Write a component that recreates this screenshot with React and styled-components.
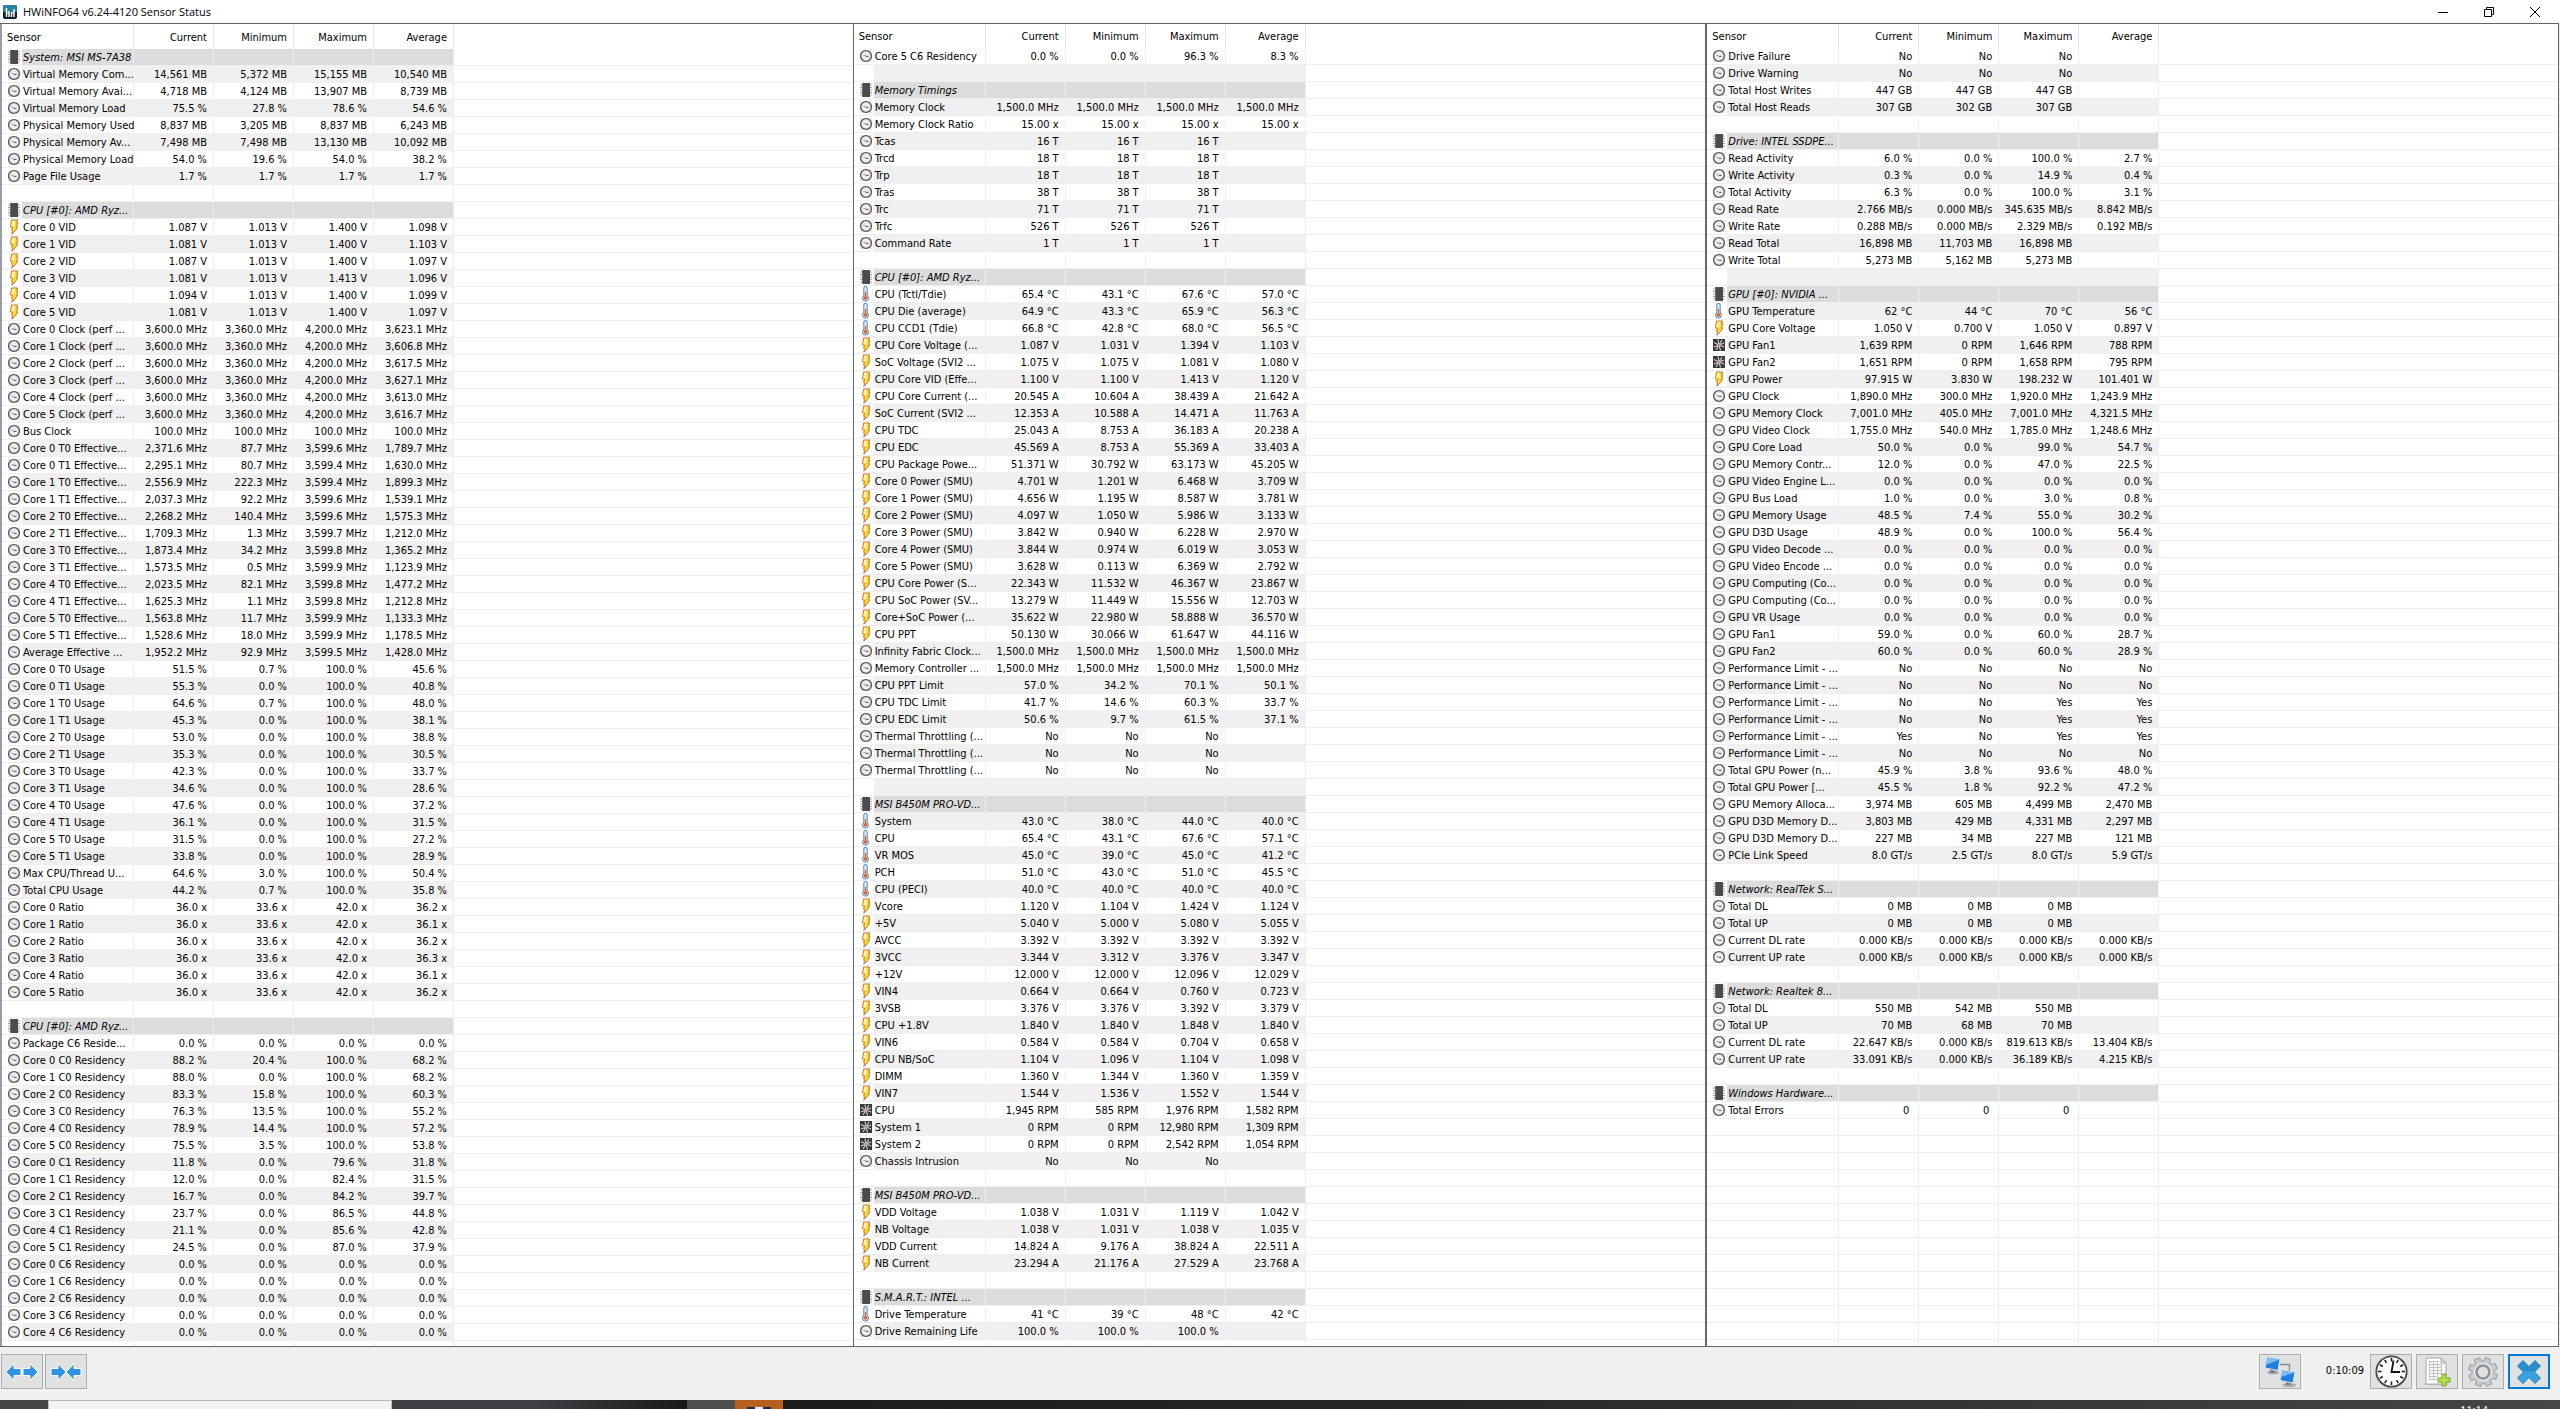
import React from "react";
import styled, { createGlobalStyle } from "styled-components";

const GlobalStyle = createGlobalStyle`
  * {
    box-sizing: border-box;
  }
  body {
    margin: 0;
    overflow: hidden;
    background: #f0f0f0;
  }
`;

const Desktop = styled.div`
  display: flex;
  flex-direction: column;
  height: 100vh;
  color: #000;
  background: #f0f0f0;
  font-family: "DejaVu Sans Condensed", "DejaVu Sans", sans-serif;
  font-size: 11px;
`;
const TitleBar = styled.header`
  display: flex;
  align-items: center;
  flex: 0 0 23px;
  padding: 0 2px 0 3px;
  background: #fff;
`;
const Title = styled.h1`
  flex: 1;
  margin: 0 0 0 6px;
  font-family: "Open Sans", "Noto Sans", sans-serif;
  font-size: 11px;
  font-weight: 400;
  line-height: 20px;
`;
const WindowButton = styled.button`
  display: flex;
  align-items: center;
  justify-content: center;
  width: 46px;
  height: 22px;
  padding: 0;
  border: 0;
  background: none;
`;
const Panels = styled.main`
  display: grid;
  grid-template-columns: repeat(3, 1fr);
  flex: 1;
  min-height: 0;
  margin-right: 1px;
  border: solid #646464;
  border-width: 1px 1px 1px 0;
  background: #fff;
`;
const Panel = styled.section`
  min-width: 0;
  overflow: hidden;
  border-left: 1px solid #66676a;

  &:first-child {
    padding-top: 1px;
    border-left: 2px solid #9a9ca6;
  }
  &:last-child {
    border-left-width: 2px;
  }
`;
const Table = styled.table`
  width: 100%;
  table-layout: fixed;
  border-spacing: 0;
  white-space: nowrap;
`;
const HeadCell = styled.th`
  height: 24px;
  padding: 0 6px 0 5px;
  border-right: 1px solid ${(p) => (p.$last ? "#fff" : "#e5e5e5")};
  font-weight: 400;
  text-align: ${(p) => (p.$left ? "left" : "right")};
`;
const rowColors = { group: "#dcdcdc", odd: "#f0f0f0", even: "#fff" };
const Row = styled.tr`
  --row-bg: ${(p) => rowColors[p.$tone]};
`;
const IconCell = styled.td`
  height: 17px;
  padding: 0 0 0 5px;
  border-bottom: 1px solid #efefef;
  line-height: 0;
`;
const NameCell = styled.th`
  padding: 2px 0 0 1px;
  border-right: 1px solid #efefef;
  border-bottom: 1px solid #efefef;
  background: var(--row-bg);
  font-weight: 400;
  font-style: ${(p) => (p.$group ? "italic" : "normal")};
  line-height: 14px;
  text-align: left;
`;
const ValueCell = styled.td`
  padding: 2px 6px 0 0;
  border-right: 1px solid #efefef;
  border-bottom: 1px solid #efefef;
  background: var(--row-bg);
  line-height: 14px;
  text-align: right;
`;
const RestCell = styled.td`
  padding: 0;
  border-bottom: 1px solid #efefef;
`;
const Toolbar = styled.footer`
  display: flex;
  align-items: flex-start;
  justify-content: space-between;
  flex: 0 0 53px;
  padding: 7px 10px 0 1px;
`;
const ToolGroup = styled.div`
  display: flex;
  gap: ${(p) => (p.$tight ? "2px" : "4px")};
`;
const ToolButton = styled.button`
  display: flex;
  align-items: center;
  justify-content: center;
  width: 42px;
  height: 35px;
  padding: 0;
  border: ${(p) => (p.$active ? "2px solid #0078d7" : "1px solid #adadad")};
  background: #e1e1e1;
`;
const Elapsed = styled.time`
  width: 61px;
  padding-right: 2px;
  line-height: 33px;
  text-align: right;
`;
const Taskbar = styled.div`
  display: flex;
  flex: 0 0 9px;
  overflow: hidden;
  background: #444546;
`;
const StartArea = styled.div`
  flex: 0 0 48px;
`;
const SearchArea = styled.div`
  flex: 0 0 344px;
  border: 1px solid #bababa;
  border-bottom: 0;
  background: #f2f2f2;
`;
const TaskArea = styled.div`
  flex: 0 0 295px;
  background: linear-gradient(90deg, #3e3f42 50%, #191919);
`;
const TaskItem = styled.div`
  display: flex;
  align-items: flex-end;
  justify-content: center;
  flex: 0 0 48px;
  background: ${(p) => (p.$alert ? "#b5601e" : "#4e4e4e")};
`;
const Tray = styled.div`
  display: flex;
  justify-content: flex-end;
  flex: 1;
  padding-right: 72px;
  background: linear-gradient(90deg, #1c1c1c, #282828 40%, #464646);
  color: #fff;
  font-family: "Open Sans", "Noto Sans", sans-serif;
  font-size: 11px;
  line-height: 20px;
`;

const ClockIcon = () => (
  <svg width="14" height="16" viewBox="0 0 14 16">
    <rect x="1" y="2" width="12" height="12" fill="#e9e9e9" />
    <circle cx="7" cy="8" r="5.400" fill="#ededed" stroke="#585858" strokeWidth="1.400" />
    <path d="M4.500 7.200 7 8.200" stroke="#b08a8a" strokeWidth="1" />
    <path d="M7 8.400h2.500" stroke="#555" strokeWidth="1" />
  </svg>
);

const BoltIcon = () => (
  <svg width="14" height="16" viewBox="0 0 14 16">
    <path
      d="M4.500 1h6L9.800 4h1L9.600 8h1L8.500 11.500 4.800 15.200l.7-3.700-.9-.3L5.500 8H3.500z"
      fill="#ffd92a"
      stroke="#c4672b"
      strokeWidth=".9"
    />
    <path d="M5.200 1.800h3.300L7 5.500h1.200L6.600 7.400H4.300z" fill="#fff3b0" />
  </svg>
);

const ThermoIcon = () => (
  <svg width="14" height="16" viewBox="0 0 14 16">
    <path
      d="M4.800 2.200a1.700 1.700 0 0 1 3.400 0v7.600a2.900 2.900 0 1 1-3.400 0z"
      fill="#e2f0fa"
      stroke="#5b93c4"
      strokeWidth="1.100"
    />
    <path d="M6.500 6v6" stroke="#ea5a17" strokeWidth="1.300" />
    <circle cx="6.500" cy="12" r="1.800" fill="#ea5a17" />
  </svg>
);

const FanIcon = () => (
  <svg width="14" height="16" viewBox="0 0 14 16">
    <rect x="1" y="2" width="12" height="12" fill="#383838" />
    <path
      d="M7 8 6 2.500M7 8l3-5M7 8l5-2M7 8l5 2M7 8l1.500 5.500M7 8l-3 5M7 8l-5 2M7 8 2 5.500"
      stroke="#d4d4d4"
      strokeWidth="1.100"
    />
    <circle cx="7" cy="8" r="1.600" fill="#b29a9c" />
  </svg>
);

const ChipIcon = () => (
  <svg width="14" height="16" viewBox="0 0 14 16">
    <path d="M1 3h12M1 5.500h12M1 8h12M1 10.500h12M1 13h12" stroke="#a3a3a3" strokeWidth="1" />
    <rect x="3" y="1" width="8" height="14" fill="#4c4c4e" />
    <path d="M3.500 1v14" stroke="#6d6d70" strokeWidth="1" />
  </svg>
);

const icons = { c: ClockIcon, v: BoltIcon, t: ThermoIcon, f: FanIcon, g: ChipIcon };

const AppIcon = () => (
  <svg width="14" height="14" viewBox="0 0 14 14">
    <rect width="14" height="14" rx="2" fill="#0f1c2b" />
    <path d="M0 2a2 2 0 0 1 2-2h10a2 2 0 0 1 2 2v5H0z" fill="#2b7ea6" />
    <path d="M3.500 3v9M6 6v6M8.500 7v5M11 4v8" stroke="#fff" strokeWidth="1.500" />
    <path d="M3.500 8H6M8.500 8H11" stroke="#fff" strokeWidth="1.200" />
  </svg>
);

const ArrowPair = ({ inward }) => (
  <svg width="34" height="18" viewBox="0 0 34 18">
    <g fill="#2f93e6" stroke="#fff" strokeWidth="1">
      {inward ? (
        <>
          <path d="M2 5.500h7V1l8 8-8 8v-4.500H2z" />
          <path d="M32 5.500h-7V1l-8 8 8 8v-4.500h7z" />
        </>
      ) : (
        <>
          <path d="M16 5.500H9V1L1 9l8 8v-4.500h7z" />
          <path d="M18 5.500h7V1l8 8-8 8v-4.500h-7z" />
        </>
      )}
    </g>
  </svg>
);

const NetworkIcon = () => (
  <svg width="34" height="31" viewBox="0 0 34 31">
    <path d="M17 8.500h9.500V15" fill="none" stroke="#8b8b8b" strokeWidth="1.400" />
    <ellipse cx="10" cy="16.500" rx="6" ry="2" fill="#a9adb0" />
    <path d="M7 13h5v4H7z" fill="#7b8085" />
    <path d="m4 1 13 2-2 11.500L2 12z" fill="#1f7ddb" stroke="#d9e4ee" />
    <path d="m4.500 1.500 12 2L3 9z" fill="#7cbdf5" />
    <ellipse cx="26" cy="29" rx="7" ry="2" fill="#a9adb0" />
    <path d="M23 25h5v4h-5z" fill="#7b8085" />
    <path d="m19 14 13 2-2 11-13-2.500z" fill="#1f7ddb" stroke="#d9e4ee" />
    <path d="m19.500 14.500 12 2L18 21z" fill="#7cbdf5" />
  </svg>
);

const BigClockIcon = () => (
  <svg width="33" height="33" viewBox="0 0 33 33">
    <circle cx="16.500" cy="16.500" r="15.200" fill="#fff" stroke="#4a4a4a" strokeWidth="1.800" />
    {[0, 30, 60, 90, 120, 150, 180, 210, 240, 270, 300, 330].map((a) => (
      <path key={a} d="M16.500 3v3.500" stroke="#222" strokeWidth="1.600" transform={`rotate(${a} 16.500 16.500)`} />
    ))}
    <path d="m18.500 5.500-2 11.500H25" fill="none" stroke="#111" strokeWidth="1.800" />
  </svg>
);

const ReportIcon = () => (
  <svg width="32" height="31" viewBox="0 0 32 31">
    <ellipse cx="15" cy="28" rx="13" ry="1.500" fill="#c4c4c4" />
    <path d="M5 2h15l5 5v21H5z" fill="#fdfdfd" stroke="#a8a8a8" />
    <path d="M20 2v5h5z" fill="#d9d9d9" stroke="#a8a8a8" />
    <path
      d="M8 5.500h10M8 8.500h13M8 11.500h13M8 14.500h13M8 17.500h13M8 20.500h9M8 23.500h8M8.500 5v19M12.500 5v19M16.500 5v15M20.500 8v10"
      fill="none"
      stroke="#c2c2c2"
    />
    <path d="M21 18h4v4h4v4h-4v4h-4v-4h-4v-4h4z" fill="#b5dd4c" stroke="#6fa51e" />
  </svg>
);

const GearIcon = () => (
  <svg width="34" height="32" viewBox="0 0 34 32">
    {[0, 45, 90, 135, 180, 225, 270, 315].map((a) => (
      <path
        key={a}
        d="M14.500 1.500h5l1.500 6h-8z"
        fill="#c6cbce"
        stroke="#979ca0"
        transform={`rotate(${a + 20} 17 16)`}
      />
    ))}
    <circle cx="17" cy="16" r="10.500" fill="#cdd2d5" />
    <circle cx="17" cy="16" r="6.500" fill="#e1e1e1" stroke="#8e9397" strokeWidth="2.600" />
    <circle cx="17" cy="16" r="8.500" fill="none" stroke="#f0f2f3" />
  </svg>
);

const CrossIcon = () => (
  <svg width="26" height="26" viewBox="0 0 26 26">
    <path
      d="m7 1.500 6 6 6-6 5.500 5.500-6 6 6 6-5.500 5.500-6-6-6 6L1.500 19l6-6-6-6z"
      fill="#3aa3de"
      stroke="#2381b8"
    />
    <path d="m7 2.200 6 6 6-6 4.800 4.800-6 5.500H8.200l-6-5.500z" fill="#2b8cc7" />
  </svg>
);

// icon|name|current|minimum|maximum|average, an empty line is a spacer row
const systemSensors = `
g|System: MSI MS-7A38
c|Virtual Memory Com...|14,561 MB|5,372 MB|15,155 MB|10,540 MB
c|Virtual Memory Avai...|4,718 MB|4,124 MB|13,907 MB|8,739 MB
c|Virtual Memory Load|75.5 %|27.8 %|78.6 %|54.6 %
c|Physical Memory Used|8,837 MB|3,205 MB|8,837 MB|6,243 MB
c|Physical Memory Av...|7,498 MB|7,498 MB|13,130 MB|10,092 MB
c|Physical Memory Load|54.0 %|19.6 %|54.0 %|38.2 %
c|Page File Usage|1.7 %|1.7 %|1.7 %|1.7 %

g|CPU [#0]: AMD Ryz...
v|Core 0 VID|1.087 V|1.013 V|1.400 V|1.098 V
v|Core 1 VID|1.081 V|1.013 V|1.400 V|1.103 V
v|Core 2 VID|1.087 V|1.013 V|1.400 V|1.097 V
v|Core 3 VID|1.081 V|1.013 V|1.413 V|1.096 V
v|Core 4 VID|1.094 V|1.013 V|1.400 V|1.099 V
v|Core 5 VID|1.081 V|1.013 V|1.400 V|1.097 V
c|Core 0 Clock (perf ...|3,600.0 MHz|3,360.0 MHz|4,200.0 MHz|3,623.1 MHz
c|Core 1 Clock (perf ...|3,600.0 MHz|3,360.0 MHz|4,200.0 MHz|3,606.8 MHz
c|Core 2 Clock (perf ...|3,600.0 MHz|3,360.0 MHz|4,200.0 MHz|3,617.5 MHz
c|Core 3 Clock (perf ...|3,600.0 MHz|3,360.0 MHz|4,200.0 MHz|3,627.1 MHz
c|Core 4 Clock (perf ...|3,600.0 MHz|3,360.0 MHz|4,200.0 MHz|3,613.0 MHz
c|Core 5 Clock (perf ...|3,600.0 MHz|3,360.0 MHz|4,200.0 MHz|3,616.7 MHz
c|Bus Clock|100.0 MHz|100.0 MHz|100.0 MHz|100.0 MHz
c|Core 0 T0 Effective...|2,371.6 MHz|87.7 MHz|3,599.6 MHz|1,789.7 MHz
c|Core 0 T1 Effective...|2,295.1 MHz|80.7 MHz|3,599.4 MHz|1,630.0 MHz
c|Core 1 T0 Effective...|2,556.9 MHz|222.3 MHz|3,599.4 MHz|1,899.3 MHz
c|Core 1 T1 Effective...|2,037.3 MHz|92.2 MHz|3,599.6 MHz|1,539.1 MHz
c|Core 2 T0 Effective...|2,268.2 MHz|140.4 MHz|3,599.6 MHz|1,575.3 MHz
c|Core 2 T1 Effective...|1,709.3 MHz|1.3 MHz|3,599.7 MHz|1,212.0 MHz
c|Core 3 T0 Effective...|1,873.4 MHz|34.2 MHz|3,599.8 MHz|1,365.2 MHz
c|Core 3 T1 Effective...|1,573.5 MHz|0.5 MHz|3,599.9 MHz|1,123.9 MHz
c|Core 4 T0 Effective...|2,023.5 MHz|82.1 MHz|3,599.8 MHz|1,477.2 MHz
c|Core 4 T1 Effective...|1,625.3 MHz|1.1 MHz|3,599.8 MHz|1,212.8 MHz
c|Core 5 T0 Effective...|1,563.8 MHz|11.7 MHz|3,599.9 MHz|1,133.3 MHz
c|Core 5 T1 Effective...|1,528.6 MHz|18.0 MHz|3,599.9 MHz|1,178.5 MHz
c|Average Effective ...|1,952.2 MHz|92.9 MHz|3,599.5 MHz|1,428.0 MHz
c|Core 0 T0 Usage|51.5 %|0.7 %|100.0 %|45.6 %
c|Core 0 T1 Usage|55.3 %|0.0 %|100.0 %|40.8 %
c|Core 1 T0 Usage|64.6 %|0.7 %|100.0 %|48.0 %
c|Core 1 T1 Usage|45.3 %|0.0 %|100.0 %|38.1 %
c|Core 2 T0 Usage|53.0 %|0.0 %|100.0 %|38.8 %
c|Core 2 T1 Usage|35.3 %|0.0 %|100.0 %|30.5 %
c|Core 3 T0 Usage|42.3 %|0.0 %|100.0 %|33.7 %
c|Core 3 T1 Usage|34.6 %|0.0 %|100.0 %|28.6 %
c|Core 4 T0 Usage|47.6 %|0.0 %|100.0 %|37.2 %
c|Core 4 T1 Usage|36.1 %|0.0 %|100.0 %|31.5 %
c|Core 5 T0 Usage|31.5 %|0.0 %|100.0 %|27.2 %
c|Core 5 T1 Usage|33.8 %|0.0 %|100.0 %|28.9 %
c|Max CPU/Thread U...|64.6 %|3.0 %|100.0 %|50.4 %
c|Total CPU Usage|44.2 %|0.7 %|100.0 %|35.8 %
c|Core 0 Ratio|36.0 x|33.6 x|42.0 x|36.2 x
c|Core 1 Ratio|36.0 x|33.6 x|42.0 x|36.1 x
c|Core 2 Ratio|36.0 x|33.6 x|42.0 x|36.2 x
c|Core 3 Ratio|36.0 x|33.6 x|42.0 x|36.3 x
c|Core 4 Ratio|36.0 x|33.6 x|42.0 x|36.1 x
c|Core 5 Ratio|36.0 x|33.6 x|42.0 x|36.2 x

g|CPU [#0]: AMD Ryz...
c|Package C6 Reside...|0.0 %|0.0 %|0.0 %|0.0 %
c|Core 0 C0 Residency|88.2 %|20.4 %|100.0 %|68.2 %
c|Core 1 C0 Residency|88.0 %|0.0 %|100.0 %|68.2 %
c|Core 2 C0 Residency|83.3 %|15.8 %|100.0 %|60.3 %
c|Core 3 C0 Residency|76.3 %|13.5 %|100.0 %|55.2 %
c|Core 4 C0 Residency|78.9 %|14.4 %|100.0 %|57.2 %
c|Core 5 C0 Residency|75.5 %|3.5 %|100.0 %|53.8 %
c|Core 0 C1 Residency|11.8 %|0.0 %|79.6 %|31.8 %
c|Core 1 C1 Residency|12.0 %|0.0 %|82.4 %|31.5 %
c|Core 2 C1 Residency|16.7 %|0.0 %|84.2 %|39.7 %
c|Core 3 C1 Residency|23.7 %|0.0 %|86.5 %|44.8 %
c|Core 4 C1 Residency|21.1 %|0.0 %|85.6 %|42.8 %
c|Core 5 C1 Residency|24.5 %|0.0 %|87.0 %|37.9 %
c|Core 0 C6 Residency|0.0 %|0.0 %|0.0 %|0.0 %
c|Core 1 C6 Residency|0.0 %|0.0 %|0.0 %|0.0 %
c|Core 2 C6 Residency|0.0 %|0.0 %|0.0 %|0.0 %
c|Core 3 C6 Residency|0.0 %|0.0 %|0.0 %|0.0 %
c|Core 4 C6 Residency|0.0 %|0.0 %|0.0 %|0.0 %
`;

const boardSensors = `
c|Core 5 C6 Residency|0.0 %|0.0 %|96.3 %|8.3 %

g|Memory Timings
c|Memory Clock|1,500.0 MHz|1,500.0 MHz|1,500.0 MHz|1,500.0 MHz
c|Memory Clock Ratio|15.00 x|15.00 x|15.00 x|15.00 x
c|Tcas|16 T|16 T|16 T|
c|Trcd|18 T|18 T|18 T|
c|Trp|18 T|18 T|18 T|
c|Tras|38 T|38 T|38 T|
c|Trc|71 T|71 T|71 T|
c|Trfc|526 T|526 T|526 T|
c|Command Rate|1 T|1 T|1 T|

g|CPU [#0]: AMD Ryz...
t|CPU (Tctl/Tdie)|65.4 °C|43.1 °C|67.6 °C|57.0 °C
t|CPU Die (average)|64.9 °C|43.3 °C|65.9 °C|56.3 °C
t|CPU CCD1 (Tdie)|66.8 °C|42.8 °C|68.0 °C|56.5 °C
v|CPU Core Voltage (...|1.087 V|1.031 V|1.394 V|1.103 V
v|SoC Voltage (SVI2 ...|1.075 V|1.075 V|1.081 V|1.080 V
v|CPU Core VID (Effe...|1.100 V|1.100 V|1.413 V|1.120 V
v|CPU Core Current (...|20.545 A|10.604 A|38.439 A|21.642 A
v|SoC Current (SVI2 ...|12.353 A|10.588 A|14.471 A|11.763 A
v|CPU TDC|25.043 A|8.753 A|36.183 A|20.238 A
v|CPU EDC|45.569 A|8.753 A|55.369 A|33.403 A
v|CPU Package Powe...|51.371 W|30.792 W|63.173 W|45.205 W
v|Core 0 Power (SMU)|4.701 W|1.201 W|6.468 W|3.709 W
v|Core 1 Power (SMU)|4.656 W|1.195 W|8.587 W|3.781 W
v|Core 2 Power (SMU)|4.097 W|1.050 W|5.986 W|3.133 W
v|Core 3 Power (SMU)|3.842 W|0.940 W|6.228 W|2.970 W
v|Core 4 Power (SMU)|3.844 W|0.974 W|6.019 W|3.053 W
v|Core 5 Power (SMU)|3.628 W|0.113 W|6.369 W|2.792 W
v|CPU Core Power (S...|22.343 W|11.532 W|46.367 W|23.867 W
v|CPU SoC Power (SV...|13.279 W|11.449 W|15.556 W|12.703 W
v|Core+SoC Power (...|35.622 W|22.980 W|58.888 W|36.570 W
v|CPU PPT|50.130 W|30.066 W|61.647 W|44.116 W
c|Infinity Fabric Clock...|1,500.0 MHz|1,500.0 MHz|1,500.0 MHz|1,500.0 MHz
c|Memory Controller ...|1,500.0 MHz|1,500.0 MHz|1,500.0 MHz|1,500.0 MHz
c|CPU PPT Limit|57.0 %|34.2 %|70.1 %|50.1 %
c|CPU TDC Limit|41.7 %|14.6 %|60.3 %|33.7 %
c|CPU EDC Limit|50.6 %|9.7 %|61.5 %|37.1 %
c|Thermal Throttling (...|No|No|No|
c|Thermal Throttling (...|No|No|No|
c|Thermal Throttling (...|No|No|No|

g|MSI B450M PRO-VD...
t|System|43.0 °C|38.0 °C|44.0 °C|40.0 °C
t|CPU|65.4 °C|43.1 °C|67.6 °C|57.1 °C
t|VR MOS|45.0 °C|39.0 °C|45.0 °C|41.2 °C
t|PCH|51.0 °C|43.0 °C|51.0 °C|45.5 °C
t|CPU (PECI)|40.0 °C|40.0 °C|40.0 °C|40.0 °C
v|Vcore|1.120 V|1.104 V|1.424 V|1.124 V
v|+5V|5.040 V|5.000 V|5.080 V|5.055 V
v|AVCC|3.392 V|3.392 V|3.392 V|3.392 V
v|3VCC|3.344 V|3.312 V|3.376 V|3.347 V
v|+12V|12.000 V|12.000 V|12.096 V|12.029 V
v|VIN4|0.664 V|0.664 V|0.760 V|0.723 V
v|3VSB|3.376 V|3.376 V|3.392 V|3.379 V
v|CPU +1.8V|1.840 V|1.840 V|1.848 V|1.840 V
v|VIN6|0.584 V|0.584 V|0.704 V|0.658 V
v|CPU NB/SoC|1.104 V|1.096 V|1.104 V|1.098 V
v|DIMM|1.360 V|1.344 V|1.360 V|1.359 V
v|VIN7|1.544 V|1.536 V|1.552 V|1.544 V
f|CPU|1,945 RPM|585 RPM|1,976 RPM|1,582 RPM
f|System 1|0 RPM|0 RPM|12,980 RPM|1,309 RPM
f|System 2|0 RPM|0 RPM|2,542 RPM|1,054 RPM
c|Chassis Intrusion|No|No|No|

g|MSI B450M PRO-VD...
v|VDD Voltage|1.038 V|1.031 V|1.119 V|1.042 V
v|NB Voltage|1.038 V|1.031 V|1.038 V|1.035 V
v|VDD Current|14.824 A|9.176 A|38.824 A|22.511 A
v|NB Current|23.294 A|21.176 A|27.529 A|23.768 A

g|S.M.A.R.T.: INTEL ...
t|Drive Temperature|41 °C|39 °C|48 °C|42 °C
c|Drive Remaining Life|100.0 %|100.0 %|100.0 %|
`;

const gpuSensors = `
c|Drive Failure|No|No|No|
c|Drive Warning|No|No|No|
c|Total Host Writes|447 GB|447 GB|447 GB|
c|Total Host Reads|307 GB|302 GB|307 GB|

g|Drive: INTEL SSDPE...
c|Read Activity|6.0 %|0.0 %|100.0 %|2.7 %
c|Write Activity|0.3 %|0.0 %|14.9 %|0.4 %
c|Total Activity|6.3 %|0.0 %|100.0 %|3.1 %
c|Read Rate|2.766 MB/s|0.000 MB/s|345.635 MB/s|8.842 MB/s
c|Write Rate|0.288 MB/s|0.000 MB/s|2.329 MB/s|0.192 MB/s
c|Read Total|16,898 MB|11,703 MB|16,898 MB|
c|Write Total|5,273 MB|5,162 MB|5,273 MB|

g|GPU [#0]: NVIDIA ...
t|GPU Temperature|62 °C|44 °C|70 °C|56 °C
v|GPU Core Voltage|1.050 V|0.700 V|1.050 V|0.897 V
f|GPU Fan1|1,639 RPM|0 RPM|1,646 RPM|788 RPM
f|GPU Fan2|1,651 RPM|0 RPM|1,658 RPM|795 RPM
v|GPU Power|97.915 W|3.830 W|198.232 W|101.401 W
c|GPU Clock|1,890.0 MHz|300.0 MHz|1,920.0 MHz|1,243.9 MHz
c|GPU Memory Clock|7,001.0 MHz|405.0 MHz|7,001.0 MHz|4,321.5 MHz
c|GPU Video Clock|1,755.0 MHz|540.0 MHz|1,785.0 MHz|1,248.6 MHz
c|GPU Core Load|50.0 %|0.0 %|99.0 %|54.7 %
c|GPU Memory Contr...|12.0 %|0.0 %|47.0 %|22.5 %
c|GPU Video Engine L...|0.0 %|0.0 %|0.0 %|0.0 %
c|GPU Bus Load|1.0 %|0.0 %|3.0 %|0.8 %
c|GPU Memory Usage|48.5 %|7.4 %|55.0 %|30.2 %
c|GPU D3D Usage|48.9 %|0.0 %|100.0 %|56.4 %
c|GPU Video Decode ...|0.0 %|0.0 %|0.0 %|0.0 %
c|GPU Video Encode ...|0.0 %|0.0 %|0.0 %|0.0 %
c|GPU Computing (Co...|0.0 %|0.0 %|0.0 %|0.0 %
c|GPU Computing (Co...|0.0 %|0.0 %|0.0 %|0.0 %
c|GPU VR Usage|0.0 %|0.0 %|0.0 %|0.0 %
c|GPU Fan1|59.0 %|0.0 %|60.0 %|28.7 %
c|GPU Fan2|60.0 %|0.0 %|60.0 %|28.9 %
c|Performance Limit - ...|No|No|No|No
c|Performance Limit - ...|No|No|No|No
c|Performance Limit - ...|No|No|Yes|Yes
c|Performance Limit - ...|No|No|Yes|Yes
c|Performance Limit - ...|Yes|No|Yes|Yes
c|Performance Limit - ...|No|No|No|No
c|Total GPU Power (n...|45.9 %|3.8 %|93.6 %|48.0 %
c|Total GPU Power [...|45.5 %|1.8 %|92.2 %|47.2 %
c|GPU Memory Alloca...|3,974 MB|605 MB|4,499 MB|2,470 MB
c|GPU D3D Memory D...|3,803 MB|429 MB|4,331 MB|2,297 MB
c|GPU D3D Memory D...|227 MB|34 MB|227 MB|121 MB
c|PCIe Link Speed|8.0 GT/s|2.5 GT/s|8.0 GT/s|5.9 GT/s

g|Network: RealTek S...
c|Total DL|0 MB|0 MB|0 MB|
c|Total UP|0 MB|0 MB|0 MB|
c|Current DL rate|0.000 KB/s|0.000 KB/s|0.000 KB/s|0.000 KB/s
c|Current UP rate|0.000 KB/s|0.000 KB/s|0.000 KB/s|0.000 KB/s

g|Network: Realtek 8...
c|Total DL|550 MB|542 MB|550 MB|
c|Total UP|70 MB|68 MB|70 MB|
c|Current DL rate|22.647 KB/s|0.000 KB/s|819.613 KB/s|13.404 KB/s
c|Current UP rate|33.091 KB/s|0.000 KB/s|36.189 KB/s|4.215 KB/s

g|Windows Hardware...
c|Total Errors|0\u00a0|0\u00a0|0\u00a0|
`;

const panels = [systemSensors, boardSensors, gpuSensors];
const VISIBLE_ROWS = 77;

const toRows = (text) => {
  const rows = text.slice(1, -1).split("\n").map((line, i) => {
    const [icon = "", name = "", ...values] = line.split("|");
    const tone = icon === "g" ? "group" : i % 2 ? "odd" : "even";
    return { icon, name, values, tone };
  });
  // the grid carries on below the last sensor
  while (rows.length < VISIBLE_ROWS) {
    rows.push({ icon: "", name: "", values: [], tone: "even" });
  }
  return rows;
};

const SensorTable = ({ text }) => (
  <Table>
    <colgroup>
      <col width="20" />
      <col width="112" />
      <col width="80" />
      <col width="80" />
      <col width="80" />
      <col width="80" />
      <col />
    </colgroup>
    <thead>
      <tr>
        <HeadCell colSpan={2} $left>Sensor</HeadCell>
        <HeadCell>Current</HeadCell>
        <HeadCell>Minimum</HeadCell>
        <HeadCell>Maximum</HeadCell>
        <HeadCell>Average</HeadCell>
        <HeadCell as="td" $last />
      </tr>
    </thead>
    <tbody>
      {toRows(text).map((row, i) => {
        const Icon = icons[row.icon];
        return (
          <Row key={i} $tone={row.tone}>
            <IconCell>{Icon && <Icon />}</IconCell>
            <NameCell scope="row" $group={row.icon === "g"}>{row.name}</NameCell>
            {[0, 1, 2, 3].map((n) => (
              <ValueCell key={n}>{row.values[n]}</ValueCell>
            ))}
            <RestCell />
          </Row>
        );
      })}
    </tbody>
  </Table>
);

const App = () => {
  return (
    <Desktop>
      <GlobalStyle />
      <TitleBar>
        <AppIcon />
        <Title>HWiNFO64 v6.24-4120 Sensor Status</Title>
        <WindowButton aria-label="Minimize">
          <svg width="10" height="10"><path d="M0 5.500h10" stroke="#000" /></svg>
        </WindowButton>
        <WindowButton aria-label="Restore">
          <svg width="10" height="10" fill="none" stroke="#000">
            <path d="M.5 2.500h7v7h-7zM2.500 2.500v-2h7v7h-2" />
          </svg>
        </WindowButton>
        <WindowButton aria-label="Close window">
          <svg width="10" height="10"><path d="m0 0 10 10M10 0 0 10" stroke="#000" /></svg>
        </WindowButton>
      </TitleBar>
      <Panels>
        {panels.map((text, i) => (
          <Panel key={i}>
            <SensorTable text={text} />
          </Panel>
        ))}
      </Panels>
      <Toolbar>
        <ToolGroup $tight>
          <ToolButton aria-label="More columns"><ArrowPair /></ToolButton>
          <ToolButton aria-label="Fewer columns"><ArrowPair inward /></ToolButton>
        </ToolGroup>
        <ToolGroup>
          <ToolButton aria-label="Remote sensors"><NetworkIcon /></ToolButton>
          <Elapsed>0:10:09</Elapsed>
          <ToolButton aria-label="Reset time"><BigClockIcon /></ToolButton>
          <ToolButton aria-label="Start logging"><ReportIcon /></ToolButton>
          <ToolButton aria-label="Settings"><GearIcon /></ToolButton>
          <ToolButton aria-label="Close" $active><CrossIcon /></ToolButton>
        </ToolGroup>
      </Toolbar>
      <Taskbar>
        <StartArea />
        <SearchArea />
        <TaskArea />
        <TaskItem />
        <TaskItem $alert>
          <svg width="24" height="2">
            <path d="M0 1h24" stroke="#1c2c4a" strokeWidth="2" />
            <path d="M8 1h8" stroke="#dfe8f0" strokeWidth="2" />
          </svg>
        </TaskItem>
        <Tray>11:14</Tray>
      </Taskbar>
    </Desktop>
  );
};

export default App;
